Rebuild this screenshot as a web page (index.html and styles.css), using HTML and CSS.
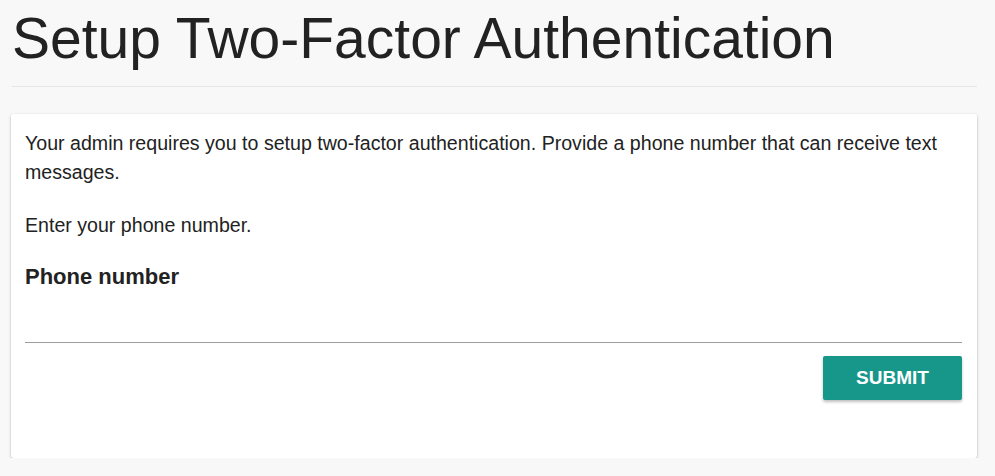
FILE: index.html
```html
<!DOCTYPE html>
<html>
<head>
<meta charset="utf-8">
<link rel="stylesheet" href="styles.css">
</head>
<body>
<div class="page">
  <h1 class="title">Setup Two-Factor Authentication</h1>
  <hr class="rule">
  <div class="card">
    <p class="text">Your admin requires you to setup two-factor authentication. Provide a phone number that can receive text messages.</p>
    <p class="text">Enter your phone number.</p>
    <label class="label" for="phone">Phone number</label>
    <input id="phone" class="input" type="tel">
    <div class="actions">
      <button class="btn">SUBMIT</button>
    </div>
  </div>
</div>
</body>
</html>
```
FILE: styles.css
```css
html, body {
  margin: 0;
  padding: 0;
  background: #f8f8f8;
  font-family: "Liberation Sans", Arial, sans-serif;
  color: #222;
}
.page {
  padding: 0 18px 0 12px;
}
.title {
  margin: 0;
  padding-top: 6px;
  font-size: 57px;
  font-weight: 400;
  line-height: 64px;
  color: #222;
}
.rule {
  margin: 16px 0 0 0;
  border: 0;
  border-top: 1px solid #e6e6e6;
  height: 0;
}
.card {
  margin: 27px 0 0 -1px;
  background: #fff;
  border-radius: 2px;
  box-shadow: 0 1px 3px rgba(0,0,0,0.25), 0 1px 1px rgba(0,0,0,0.12);
  padding: 15px 15px 58px 14px;
}
.text {
  margin: 0 0 24px 0;
  font-size: 19.6px;
  line-height: 29px;
  color: #222;
}
.label {
  display: block;
  font-size: 22px;
  font-weight: 700;
  line-height: 28px;
  margin-top: -1px;
  color: #222;
}
.input {
  display: block;
  width: 100%;
  box-sizing: border-box;
  border: 0;
  border-bottom: 1px solid #9e9e9e;
  height: 52px;
  margin: 0;
  padding: 0;
  background: transparent;
  outline: none;
  font-size: 18px;
}
.actions {
  display: flex;
  justify-content: flex-end;
  margin-top: 13px;
}
.btn {
  width: 139px;
  height: 44px;
  border: 0;
  border-radius: 2px;
  background: #17968a;
  color: #fff;
  font-family: "Liberation Sans", Arial, sans-serif;
  font-size: 19px;
  font-weight: 700;
  box-shadow: 0 2px 3px rgba(0,0,0,0.25);
  cursor: pointer;
}
```
